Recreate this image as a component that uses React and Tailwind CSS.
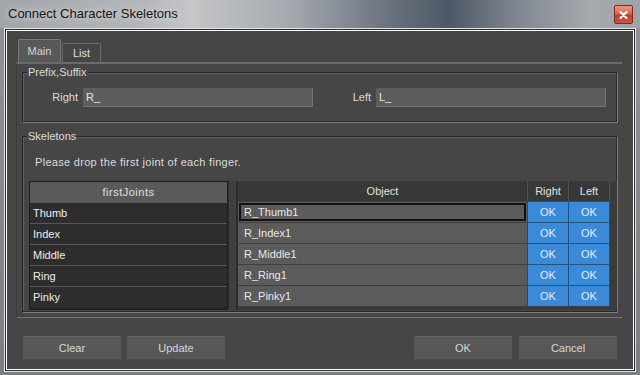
import React from "react";

const fingers = ["Thumb", "Index", "Middle", "Ring", "Pinky"];

// Group box with an etched frame and a legend sitting on the top line
const GroupBox = ({ title, className, children }) => (
  <div
    className={`relative border-t border-l border-t-[#262626] border-l-[#262626] border-b border-r border-b-[#7c7c7c] border-r-[#7c7c7c] shadow-[inset_-1px_-1px_0_#2a2a2a,inset_1px_1px_0_#5e5e5e] ${className}`}
  >
    <span className="absolute -top-[8px] left-[4px] px-px bg-[#464646] text-[11px] leading-[14px] text-[#dcdcdc]">
      {title}
    </span>
    {children}
  </div>
);

const Button = ({ label }) => (
  <button className="w-[98px] h-[24px] bg-[#575757] border-t border-t-[#626262] border-b border-b-[#4a4a4a] text-[11px] text-[#d8d8d8]">
    {label}
  </button>
);

export default function App() {
  return (
    <div
      className="w-[640px] h-[375px] flex flex-col bg-[linear-gradient(180deg,#8f9398,#7b7f85)] overflow-hidden"
      style={{ fontFamily: '"Liberation Sans", Arial, sans-serif' }}
    >
      {/* title bar */}
      <div className="h-[28px] shrink-0 flex items-center justify-between pl-[8px] pr-[7px] bg-[linear-gradient(90deg,#a2a6aa_0%,#b4b7ba_22%,#c4c6c8_30%,#a6aab0_45%,#6d7581_60%,#4e5765_70%,#7d848e_80%,#a6aaae_92%,#9fa3a7_100%)]">
        <span className="text-[13px] text-[#141414] [text-shadow:0_0_6px_#e8e8e8]">
          Connect Character Skeletons
        </span>
        <div className="w-[19px] h-[19px] mt-[1px] flex items-center justify-center rounded-[2px] border border-[#7a2c22] bg-[linear-gradient(180deg,#eb9a86_0%,#d9644e_45%,#c23d28_55%,#d0553f_100%)]">
          <svg width="9" height="8" viewBox="0 0 9 8">
            <path d="M1.5 1 L7.5 7 M7.5 1 L1.5 7" stroke="#ffffff" strokeWidth="2.2" strokeLinecap="round" />
          </svg>
        </div>
      </div>

      {/* client area */}
      <div className="mx-[4px] h-[344px] border border-[#e4e4e4] bg-[#2b2b2b] p-px">
        <div className="h-full flex flex-col border border-white bg-[#464646] pt-[8px]">
          {/* tabs */}
          <div className="flex items-end h-[23px] pl-[11px]">
            <div className="w-[43px] h-[23px] flex items-center justify-center bg-[#585858] border-t border-l border-r border-[#7a7a7a] rounded-t-[2px] text-[11px] text-[#d6d6d6]">
              Main
            </div>
            <div className="w-[39px] h-[19px] ml-px flex items-center justify-center bg-[#454545] border-t border-l border-r border-[#6c6c6c] rounded-t-[2px] text-[11px] text-[#e0e0e0]">
              List
            </div>
          </div>

          {/* tab page */}
          <div className="ml-[9px] w-[606px] h-[256px] flex flex-col border-t-2 border-t-[#6b6b6b] border-b border-b-[#727272] border-l border-l-[#3a3a3a] pt-[8px] pl-[5px]">
            <GroupBox title="Prefix,Suffix" className="w-[596px] h-[51px]">
              <div className="flex items-center pt-[15px]">
                <span className="w-[55px] text-right mr-[5px] text-[11px] text-[#dcdcdc]">Right</span>
                <div className="w-[230px] h-[19px] flex items-center pl-[3px] bg-[#5d5d5d] border-r border-b border-[#747474] text-[11px] text-[#e6e6e6]">
                  R_
                </div>
                <span className="w-[58px] text-right mr-[5px] text-[11px] text-[#dcdcdc]">Left</span>
                <div className="w-[230px] h-[19px] flex items-center pl-[3px] bg-[#5d5d5d] border-r border-b border-[#747474] text-[11px] text-[#e6e6e6]">
                  L_
                </div>
              </div>
            </GroupBox>

            <GroupBox title="Skeletons" className="w-[596px] h-[177px] mt-[13px]">
              <p className="pt-[19px] pl-[12px] text-[11px] leading-[13px] tracking-[0.3px] text-[#dcdcdc]">
                Please drop the first joint of each finger.
              </p>
              <div className="flex mt-[12px] ml-[6px] h-[129px]">
                {/* first joints list */}
                <div className="w-[199px] h-full bg-[#262626] border border-[#1f1f1f]">
                  <div className="h-[20px] flex items-center justify-center bg-[#5a5a5a] text-[11px] tracking-[0.5px] text-[#e0e0e0]">
                    firstJoints
                  </div>
                  {fingers.map((f) => (
                    <div
                      key={f}
                      className="h-[21px] flex items-center pl-[3px] bg-[#2d2d2d] border-t border-[#575757] text-[11px] text-[#eeeeee]"
                    >
                      {f}
                    </div>
                  ))}
                </div>

                {/* splitter */}
                <div className="w-[9px] h-full border-l border-r border-[#2c2c2c] bg-[#3f3f3f]" />

                {/* object table */}
                <div className="w-[380px] h-full bg-[#3b3b3b] border-l border-[#2a2a2a]">
                  <div className="flex h-[20px] text-[11px] text-[#e0e0e0]">
                    <div className="w-[290px] flex items-center justify-center bg-[#383838] border-r border-[#505050]">
                      Object
                    </div>
                    <div className="w-[41px] flex items-center justify-center bg-[#383838] border-r border-[#505050]">
                      Right
                    </div>
                    <div className="w-[41px] flex items-center justify-center bg-[#383838] border-r border-[#505050]">
                      Left
                    </div>
                  </div>
                  {fingers.map((f, i) => (
                    <div key={f} className="flex h-[21px] text-[11px]">
                      <div className="w-[290px] p-px bg-[#5b5b5b] border-t border-t-[#3e3e3e] border-r border-r-[#444444]">
                        <div
                          className={`h-full flex items-center pl-[3px] text-[#e8e8e8] ${
                            i === 0 ? "border-2 border-[#111111]" : "pl-[5px]"
                          }`}
                        >
                          R_{f}1
                        </div>
                      </div>
                      <div className="w-[41px] flex items-center justify-center bg-[#3a8ad9] border-t border-r border-[#24527f] text-[#e6eef7]">
                        OK
                      </div>
                      <div className="w-[41px] flex items-center justify-center bg-[#3a8ad9] border-t border-r border-[#24527f] text-[#e6eef7]">
                        OK
                      </div>
                    </div>
                  ))}
                </div>
              </div>
            </GroupBox>
          </div>

          {/* dialog buttons */}
          <div className="flex justify-between px-[16px] mt-[18px]">
            <div className="flex gap-[6px]">
              <Button label="Clear" />
              <Button label="Update" />
            </div>
            <div className="flex gap-[7px]">
              <Button label="OK" />
              <Button label="Cancel" />
            </div>
          </div>
        </div>
      </div>
    </div>
  );
}
